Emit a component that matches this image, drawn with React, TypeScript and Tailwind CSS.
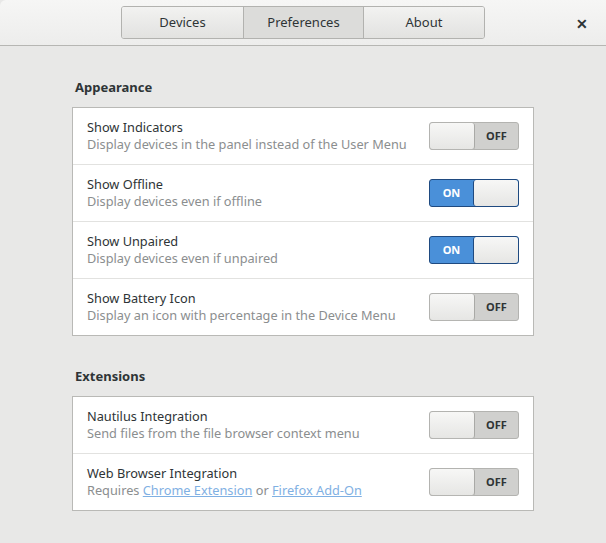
import { ReactNode } from "react";

const font = { fontFamily: '"Noto Sans", "Open Sans", sans-serif' };

function Switch({ on }: { on: boolean }) {
  if (on) {
    return (
      <div className="flex h-[28px] w-[90px] items-stretch rounded-[3px] border border-[#1f4a80] bg-[#4a90d9]">
        <div className="flex w-[43px] items-center justify-center text-[11px] font-bold text-white">
          ON
        </div>
        <div className="flex-1 rounded-[3px] border-l border-[#1f4a80] bg-gradient-to-b from-[#f7f7f6] to-[#e6e6e4]" />
      </div>
    );
  }
  return (
    <div className="flex h-[28px] w-[90px] items-stretch rounded-[3px] border border-[#b3b3b0] bg-[#d0d0ce]">
      <div className="w-[45px] rounded-[3px] border-r border-[#a9a9a6] bg-gradient-to-b from-[#f7f7f6] to-[#e6e6e4] shadow-[0_1px_0_#b5b5b2]" />
      <div className="flex flex-1 items-center justify-center text-[11px] font-bold text-[#2e3436]">
        OFF
      </div>
    </div>
  );
}

function Row({
  title,
  subtitle,
  on,
  last,
}: {
  title: string;
  subtitle: ReactNode;
  on: boolean;
  last?: boolean;
}) {
  return (
    <div
      className={`flex items-center justify-between pl-[14px] pr-[14px] ${
        last ? "h-[56px]" : "h-[57px] border-b border-[#e2e2e0]"
      }`}
    >
      <div className="flex flex-col">
        <div className="text-[12.75px] leading-[17px] text-[#2e3436]">{title}</div>
        <div className="text-[12.75px] leading-[17px] text-[#8b8e8f]">{subtitle}</div>
      </div>
      <Switch on={on} />
    </div>
  );
}

function Section({ title, children }: { title: string; children: ReactNode }) {
  return (
    <section className="flex flex-col">
      <h2 className="mb-[11px] pl-[3px] text-[13px] font-bold leading-[17px] text-[#2e3436]">
        {title}
      </h2>
      <div className="border border-[#b9b9b6] bg-white">{children}</div>
    </section>
  );
}

export default function App() {
  return (
    <div className="h-[543px] w-[606px] overflow-hidden bg-[#e8e8e7]" style={font}>
      <header className="relative flex h-[46px] items-center justify-center rounded-tl-[6px] border-b border-[#b6b6b3] bg-gradient-to-b from-[#f6f6f5] to-[#ededec]">
        <nav className="flex h-[33px] overflow-hidden rounded-[3px] border border-[#b2b2af] text-[13px] text-[#2e3436]">
          <button className="w-[121px] bg-gradient-to-b from-[#f2f2f1] to-[#e2e2e0]">Devices</button>
          <button className="w-[121px] border-x border-[#b2b2af] bg-[#dcdcda]">Preferences</button>
          <button className="w-[120px] bg-gradient-to-b from-[#f2f2f1] to-[#e2e2e0]">About</button>
        </nav>
        <span className="absolute right-[18px] top-[13px] text-[14px] font-bold text-[#2e3436]">✕</span>
      </header>
      <main className="flex flex-col gap-[32px] px-[72px] pt-[33px]">
        <Section title="Appearance">
          <Row title="Show Indicators" subtitle="Display devices in the panel instead of the User Menu" on={false} />
          <Row title="Show Offline" subtitle="Display devices even if offline" on />
          <Row title="Show Unpaired" subtitle="Display devices even if unpaired" on />
          <Row title="Show Battery Icon" subtitle="Display an icon with percentage in the Device Menu" on={false} last />
        </Section>
        <Section title="Extensions">
          <Row title="Nautilus Integration" subtitle="Send files from the file browser context menu" on={false} />
          <Row
            title="Web Browser Integration"
            subtitle={
              <>
                Requires <a className="text-[#7fb0e3] underline" href="#">Chrome Extension</a> or{" "}
                <a className="text-[#7fb0e3] underline" href="#">Firefox Add-On</a>
              </>
            }
            on={false}
            last
          />
        </Section>
      </main>
    </div>
  );
}
